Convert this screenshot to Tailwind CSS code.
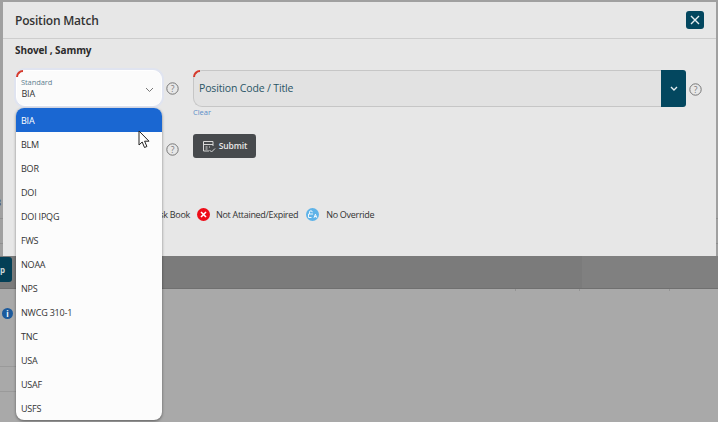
<!DOCTYPE html>
<html lang="en">
<head>
  <meta charset="UTF-8">
  <title>Position Match</title>
  <script src="https://cdn.jsdelivr.net/npm/@tailwindcss/browser@4"></script>
</head>
<body class="bg-[#a9a9a9] font-['Open_Sans','Noto_Sans',sans-serif] overflow-hidden">
  <div class="relative w-[718px] h-[422px] overflow-hidden">

    <!-- page behind the overlay -->
    <div class="flex flex-col h-full">
      <div class="relative h-[256px] bg-[#a0a0a0] flex flex-col justify-end">
        <span class="absolute -left-[4px] top-[196px] text-[9px] leading-[14px] text-[#333]">3</span>
        <div class="h-[25px] border-t border-[#8f8f8f]"></div>
        <div class="h-[13px] border-t border-[#8f8f8f]"></div>
      </div>
      <div class="h-[33px] bg-[#7b7b7b] border-b border-[#707070] flex items-start justify-between">
        <div class="w-[12px] h-[25px] mt-[1px] bg-[#033f56] rounded-r-[3px] flex items-center text-[8px] font-bold text-[#cfd8dc] pl-[0px]">p</div>
        <div class="w-[136px] h-full bg-[#808080]"></div>
      </div>
      <div class="relative flex-1 flex flex-col w-[16px]">
        <div class="h-[19px]"></div>
        <div class="h-[12px] pl-[2px]">
          <div class="w-[11px] h-[11px] rounded-full bg-[#1c5a9c] flex items-center justify-center text-[8px] font-bold text-white">i</div>
        </div>
        <div class="h-[47px] border-b border-[#9a9a9a]"></div>
        <div class="h-[25px] border-b border-[#9a9a9a]"></div>
      </div>
    </div>
    <span class="absolute left-[515px] top-[289px] w-px h-[2px] bg-[#949494]"></span>
    <span class="absolute left-[579px] top-[289px] w-px h-[2px] bg-[#949494]"></span>
    <span class="absolute left-[669px] top-[289px] w-px h-[2px] bg-[#949494]"></span>

    <!-- modal -->
    <div class="absolute left-[3px] top-[2px] w-[713px] h-[254px] bg-[#e7e7e7]">
      <div class="h-[37px] border-b border-[#cdcdcd] flex items-center justify-between pl-[12px] pr-[12px]">
        <h1 class="text-[12px] font-semibold text-[#333] pt-[1px] tracking-[-0.2px]">Position Match</h1>
        <button class="w-[18px] h-[18px] rounded-[3px] bg-[#03475f] flex items-center justify-center">
          <svg width="10" height="10" viewBox="0 0 10 10" fill="none" stroke="#e6eef1" stroke-width="1.4"><path d="M1 1l8 8M9 1l-8 8"/></svg>
        </button>
      </div>
      <div class="pl-[12px] pt-[4px] text-[10px] font-bold text-[#2b2b2b] leading-[14px] tracking-[-0.1px]">Shovel , Sammy</div>

      <div class="flex items-start pl-[13px] pt-[13px]">
        <div class="relative w-[146px] h-[36px] bg-[#fbfbfb] rounded-[9px] ring-2 ring-[#e0e4f0] border border-white pl-[4px]">
          <span class="absolute -left-[1px] -top-[1px] w-[7px] h-[7px] border-l-2 border-t-2 border-[#d63a2c] rounded-tl-[8px]"></span>
          <div class="text-[7.5px] leading-[10px] text-[#5f8190] pt-[6px] tracking-[-0.1px]">Standard</div>
          <div class="text-[9px] leading-[13px] text-[#333] pl-[0.5px] tracking-[-0.2px]">BIA</div>
          <svg class="absolute right-[7px] top-[16px]" width="9" height="6" viewBox="0 0 9 6" fill="none" stroke="#777" stroke-width="1"><path d="M1 1l3.5 3.5L8 1"/></svg>
        </div>
        <svg class="ml-[4px] mt-[12px]" width="13" height="13" viewBox="0 0 13 13" fill="none"><circle cx="6.5" cy="6.5" r="5.7" stroke="#777"/><text x="6.5" y="9.6" text-anchor="middle" font-size="8.5" fill="#777">?</text></svg>
        <div class="ml-[14px]">
          <div class="flex h-[37px] w-[493px]">
            <div class="relative flex-1 bg-[#e2e2e2] border border-r-0 border-[#c6c6c6] rounded-l-[9px] flex items-center pl-[5px] text-[10.5px] text-[#2a5566] tracking-[-0.15px]">
              <span class="absolute -left-[1px] -top-[1px] w-[7px] h-[7px] border-l-2 border-t-2 border-[#d63a2c] rounded-tl-[8px]"></span>
              Position Code / Title
            </div>
            <div class="w-[25px] bg-[#03475f] rounded-r-[3px] flex items-center justify-center">
              <svg width="8" height="6" viewBox="0 0 8 6" fill="none" stroke="#e6eef1" stroke-width="1.4"><path d="M1 1l3 3 3-3"/></svg>
            </div>
          </div>
          <div class="text-[7.5px] leading-[10px] text-[#5b8fc7]">Clear</div>
        </div>
      </div>

      <svg class="absolute left-[686px] top-[81px]" width="13" height="13" viewBox="0 0 13 13" fill="none"><circle cx="6.5" cy="6.5" r="5.7" stroke="#777"/><text x="6.5" y="9.6" text-anchor="middle" font-size="8.5" fill="#777">?</text></svg>

      <div class="flex items-center pl-[163px] pt-[17px]">
        <svg class="mt-[6px]" width="13" height="13" viewBox="0 0 13 13" fill="none"><circle cx="6.5" cy="6.5" r="5.7" stroke="#777"/><text x="6.5" y="9.6" text-anchor="middle" font-size="8.5" fill="#777">?</text></svg>
        <button class="ml-[14px] w-[63px] h-[24px] rounded-[3px] bg-[#474a4d] flex items-center justify-center gap-[3px] text-[8.5px] font-semibold text-[#e8e8e8] tracking-[-0.1px]">
          <svg width="14" height="13" viewBox="0 0 14 13" fill="none" stroke="#d8d8d8" stroke-width="1"><path d="M7 11H1.5V1.5h9.5V6"/><path d="M1.5 4.5H11M3.5 7h2M3.5 9h2M7 7h1"/><path d="M7.5 10l2 2 3.5-3.5"/></svg>
          Submit
        </button>
      </div>

      <div class="flex items-center pl-[147px] pt-[50px] text-[9px] text-[#333] tracking-[-0.3px]">
        <span>Task Book</span>
        <span class="ml-[7px] w-[13px] h-[13px] rounded-full bg-[#ee0d18] flex items-center justify-center">
          <svg width="7" height="7" viewBox="0 0 7 7" fill="none" stroke="#fff" stroke-width="1.6"><path d="M1 1l5 5M6 1L1 6"/></svg>
        </span>
        <span class="ml-[6px]">Not Attained/Expired</span>
        <span class="ml-[8px] w-[13px] h-[13px] rounded-full bg-[#5fb3e8] flex items-center justify-center -mt-[1px]">
          <svg width="10" height="9" viewBox="0 0 10 9" fill="none" stroke="#fff" stroke-width="0.9"><path d="M1.5 4V2.2a1.4 1.4 0 012.8 0"/><path d="M0.5 4h4.5M0.5 4v3.5h3M6 7.8l1.4-3.6 1.4 3.6M6.5 6.6h1.8"/></svg>
        </span>
        <span class="ml-[7px] -mt-[1px]">No Override</span>
      </div>

      <!-- Standard dropdown list -->
      <ul class="absolute left-[13px] top-[106px] w-[146px] h-[312px] bg-[#fcfcfc] rounded-[8px] overflow-hidden shadow-[0_1px_3px_rgba(0,0,0,0.45)] text-[9px] text-[#333] tracking-[-0.2px]">
        <li class="h-[24px] flex items-center pl-[5px] pt-[1px] bg-[#1a67d2] text-white">BIA</li>
        <li class="h-[24px] flex items-center pl-[5px] pt-[1px]">BLM</li>
        <li class="h-[24px] flex items-center pl-[5px] pt-[1px]">BOR</li>
        <li class="h-[24px] flex items-center pl-[5px] pt-[1px]">DOI</li>
        <li class="h-[24px] flex items-center pl-[5px] pt-[1px]">DOI IPQG</li>
        <li class="h-[24px] flex items-center pl-[5px] pt-[1px]">FWS</li>
        <li class="h-[24px] flex items-center pl-[5px] pt-[1px]">NOAA</li>
        <li class="h-[24px] flex items-center pl-[5px] pt-[1px]">NPS</li>
        <li class="h-[24px] flex items-center pl-[5px] pt-[1px]">NWCG 310-1</li>
        <li class="h-[24px] flex items-center pl-[5px] pt-[1px]">TNC</li>
        <li class="h-[24px] flex items-center pl-[5px] pt-[1px]">USA</li>
        <li class="h-[24px] flex items-center pl-[5px] pt-[1px]">USAF</li>
        <li class="h-[24px] flex items-center pl-[5px] pt-[1px]">USFS</li>
      </ul>

      <!-- mouse pointer -->
      <svg class="absolute left-[135px] top-[128px]" width="13" height="20" viewBox="0 0 13 20" fill="#fff" stroke="#222" stroke-width="1"><path d="M1 1v14l3.2-3 2.3 5.5 2.4-1-2.3-5.3H11z"/></svg>
    </div>
  </div>
</body>
</html>
